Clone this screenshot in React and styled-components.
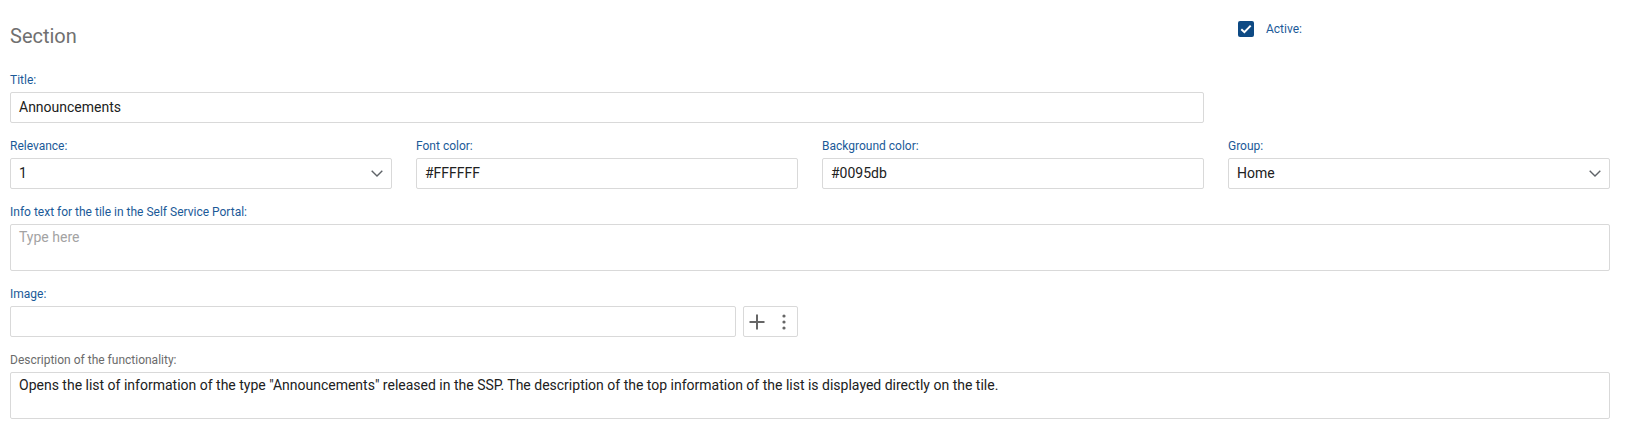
import styled, { createGlobalStyle } from "styled-components";

const GlobalStyle = createGlobalStyle`
    body {
        margin: 0;
        background: #fff;
        font-family: Roboto, "Liberation Sans", Arial, sans-serif;
    }
`;

const Form = styled.form`
    width: 1600px;
    margin-left: 10px;
    padding-top: 21px;
    display: grid;
    grid-template-columns: repeat(4, 1fr);
    column-gap: 24px;
    row-gap: 16px;
`;

const Heading = styled.h2`
    grid-column: span 3;
    margin: 3px 0 9px;
    font-size: 20px;
    line-height: 24px;
    font-weight: 400;
    color: #707070;
`;

const ActiveToggle = styled.label`
    display: flex;
    align-items: flex-start;
    gap: 12px;
    padding-left: 10px;
    font-size: 12px;
    line-height: 16px;
    color: #1b5a98;
`;

const Check = styled.span`
    width: 16px;
    height: 16px;
    border-radius: 2px;
    background: #0e4a84;
    display: flex;
    align-items: center;
    justify-content: center;
`;

const Spacer = styled.div`
    grid-column: span ${({ span }) => span || 1};
`;

const Field = styled.div`
    grid-column: span ${({ span }) => span || 1};
    display: flex;
    flex-direction: column;
    gap: 5px;
`;

const Label = styled.label`
    font-size: 12px;
    line-height: 14px;
    color: ${({ muted }) => (muted ? "#6b6b6b" : "#1b5a98")};
`;

const Box = styled.div`
    box-sizing: border-box;
    height: ${({ tall }) => (tall ? "47px" : "31px")};
    border: 1px solid #d9d9d9;
    border-radius: 2px;
    padding: ${({ tall }) => (tall ? "4px 8px" : "0 8px")};
    display: flex;
    align-items: ${({ tall }) => (tall ? "flex-start" : "center")};
    justify-content: space-between;
    font-size: 14px;
    line-height: 17px;
    color: ${({ placeholder }) => (placeholder ? "#a3a3a3" : "#212121")};
    flex: ${({ grow }) => (grow ? 1 : "none")};
`;

const ImageRow = styled.div`
    display: flex;
    gap: 7px;
`;

const Actions = styled.div`
    box-sizing: border-box;
    width: 55px;
    height: 31px;
    border: 1px solid #d9d9d9;
    border-radius: 2px;
    display: flex;
    align-items: center;
    padding-left: 5px;
    gap: 17px;
`;

const Chevron = () => (
    <svg width="12" height="7" viewBox="0 0 12 7" fill="none">
        <path d="M0.7 0.7 L6 6 L11.3 0.7" stroke="#5f6368" strokeWidth="1.4" />
    </svg>
);

const Select = ({ value }) => (
    <Box>
        {value}
        <Chevron />
    </Box>
);

export default function App() {
    return (
        <>
            <GlobalStyle />
            <Form>
                <Heading>Section</Heading>
                <ActiveToggle>
                    <Check>
                        <svg width="12" height="10" viewBox="0 0 12 10" fill="none">
                            <path d="M1.3 5.2 L4.4 8.2 L10.7 1.6" stroke="#fff" strokeWidth="2" />
                        </svg>
                    </Check>
                    Active:
                </ActiveToggle>

                <Field span={3}>
                    <Label>Title:</Label>
                    <Box>Announcements</Box>
                </Field>
                <Spacer />

                <Field>
                    <Label>Relevance:</Label>
                    <Select value="1" />
                </Field>
                <Field>
                    <Label>Font color:</Label>
                    <Box>#FFFFFF</Box>
                </Field>
                <Field>
                    <Label>Background color:</Label>
                    <Box>#0095db</Box>
                </Field>
                <Field>
                    <Label>Group:</Label>
                    <Select value="Home" />
                </Field>

                <Field span={4}>
                    <Label>Info text for the tile in the Self Service Portal:</Label>
                    <Box tall placeholder>Type here</Box>
                </Field>

                <Field span={2}>
                    <Label>Image:</Label>
                    <ImageRow>
                        <Box grow />
                        <Actions>
                            <svg width="16" height="16" viewBox="0 0 16 16">
                                <path d="M8 0.5 V15.5 M0.5 8 H15.5" stroke="#666" strokeWidth="2" />
                            </svg>
                            <svg width="4" height="16" viewBox="0 0 4 16" fill="#666">
                                <circle cx="2" cy="2" r="1.6" />
                                <circle cx="2" cy="8" r="1.6" />
                                <circle cx="2" cy="14" r="1.6" />
                            </svg>
                        </Actions>
                    </ImageRow>
                </Field>
                <Spacer span={2} />

                <Field span={4}>
                    <Label muted>Description of the functionality:</Label>
                    <Box tall>
                        Opens the list of information of the type "Announcements" released in the SSP. The
                        description of the top information of the list is displayed directly on the tile.
                    </Box>
                </Field>
            </Form>
        </>
    );
}
